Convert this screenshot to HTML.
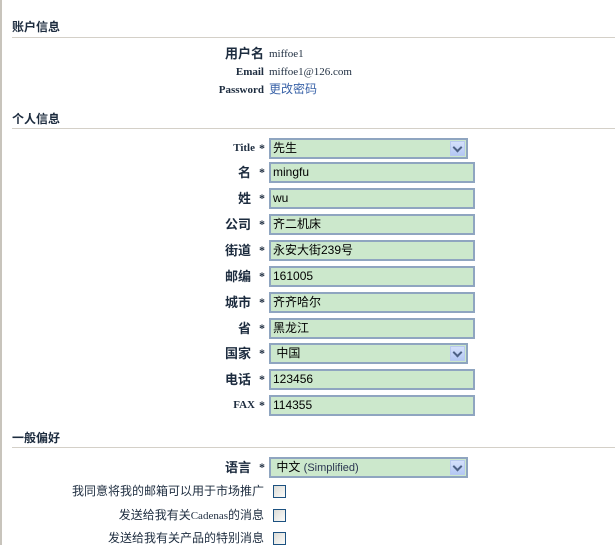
<!DOCTYPE html>
<html><head><meta charset="utf-8"><style>
body{margin:0;width:615px;height:545px;background:#fff;position:relative;overflow:hidden;font-family:"Liberation Serif","Noto Sans CJK SC",serif;color:#1d2c3f}
.vl{position:absolute;left:0;top:0;width:2px;height:545px;background:#c8c4bc}
.h{position:absolute;left:12px;font:bold 12px "Liberation Sans","Noto Sans CJK SC",sans-serif;color:#1d2c3f;line-height:16px}
.hr{position:absolute;left:12px;right:0;height:1px;background:#d4d0c8}
.lab{position:absolute;right:351px;font-weight:bold;font-size:12px;text-align:right;white-space:nowrap;line-height:20px;height:20px}
.cj{font-family:"Noto Sans CJK SC",sans-serif;font-size:13px;right:364px}
.st{position:absolute;left:259px;font-size:12px;font-weight:bold;color:#1d2c3f;line-height:20px}
.val{position:absolute;left:269px;font-size:11px;line-height:16px}
.in{position:absolute;left:269px;width:200px;height:17px;border:2px solid #8fa5c0;background:#cce8cc;font:12px "Liberation Sans","Noto Sans CJK SC",sans-serif;line-height:17px;padding-left:2px;color:#000}
.sel{width:193px}
.arr{position:absolute;right:1px;top:1px;width:15px;height:15px;background:linear-gradient(#d4e0fb,#b4c8f4);border:1px solid #b8c9ef;box-sizing:border-box}
.arr:after{content:"";position:absolute;left:3px;top:2px;width:5px;height:5px;border-right:2px solid #4d6185;border-bottom:2px solid #4d6185;transform:rotate(45deg)}
.cb{position:absolute;left:273px;width:11px;height:11px;border:1px solid #1c5180;background:linear-gradient(135deg,#dcdcd7,#fbfbf9)}
.cl{position:absolute;right:351px;font:12px "Liberation Sans","Noto Sans CJK SC",sans-serif;color:#1d2c3f;white-space:nowrap;line-height:16px}
</style></head><body>
<div class="vl"></div>
<div class="h" style="top:19px">账户信息</div><div class="hr" style="top:37px"></div>
<div class="lab cj" style="top:43px;right:351px;font-size:13px">用户名</div><div class="val" style="top:46px">miffoe1</div>
<div class="lab" style="top:62px;font-size:11px">Email</div><div class="val" style="top:64px">miffoe1@126.com</div>
<div class="lab" style="top:80px;font-size:11px">Password</div><div class="val" style="top:81px;font-family:'Liberation Sans','Noto Sans CJK SC',sans-serif;font-size:12px;color:#3a63a8">更改密码</div>
<div class="h" style="top:111px">个人信息</div><div class="hr" style="top:128px"></div>

<div class="lab" style="top:138px;right:360px;font-size:11px">Title</div><div class="st" style="top:138px">*</div>
<div class="in sel" style="top:138px">先生<div class="arr"></div></div>
<div class="lab cj" style="top:162px">名</div><div class="st" style="top:162px">*</div><div class="in" style="top:162px">mingfu</div>
<div class="lab cj" style="top:188px">姓</div><div class="st" style="top:188px">*</div><div class="in" style="top:188px">wu</div>
<div class="lab cj" style="top:214px">公司</div><div class="st" style="top:214px">*</div><div class="in" style="top:214px">齐二机床</div>
<div class="lab cj" style="top:240px">街道</div><div class="st" style="top:240px">*</div><div class="in" style="top:240px">永安大街239号</div>
<div class="lab cj" style="top:266px">邮编</div><div class="st" style="top:266px">*</div><div class="in" style="top:266px">161005</div>
<div class="lab cj" style="top:292px">城市</div><div class="st" style="top:292px">*</div><div class="in" style="top:292px">齐齐哈尔</div>
<div class="lab cj" style="top:318px">省</div><div class="st" style="top:318px">*</div><div class="in" style="top:318px">黑龙江</div>
<div class="lab cj" style="top:343px">国家</div><div class="st" style="top:343px">*</div><div class="in sel" style="top:343px">&nbsp;中国<div class="arr"></div></div>
<div class="lab cj" style="top:369px">电话</div><div class="st" style="top:369px">*</div><div class="in" style="top:369px">123456</div>
<div class="lab" style="top:395px;right:360px;font-size:11px">FAX</div><div class="st" style="top:395px">*</div><div class="in" style="top:395px">114355</div>

<div class="h" style="top:430px">一般偏好</div><div class="hr" style="top:447px"></div>
<div class="lab cj" style="top:457px">语言</div><div class="st" style="top:457px">*</div>
<div class="in sel" style="top:457px">&nbsp;中文 <span style="font-size:11px;color:#2a3550">(Simplified)</span><div class="arr"></div></div>
<div class="cl" style="top:483px">我同意将我的邮箱可以用于市场推广</div><div class="cb" style="top:485px"></div>
<div class="cl" style="top:507px">发送给我有关<span style="font-family:'Liberation Serif',serif;font-size:11px">Cadenas</span>的消息</div><div class="cb" style="top:509px"></div>
<div class="cl" style="top:530px">发送给我有关产品的特别消息</div><div class="cb" style="top:532px"></div>
</body></html>
